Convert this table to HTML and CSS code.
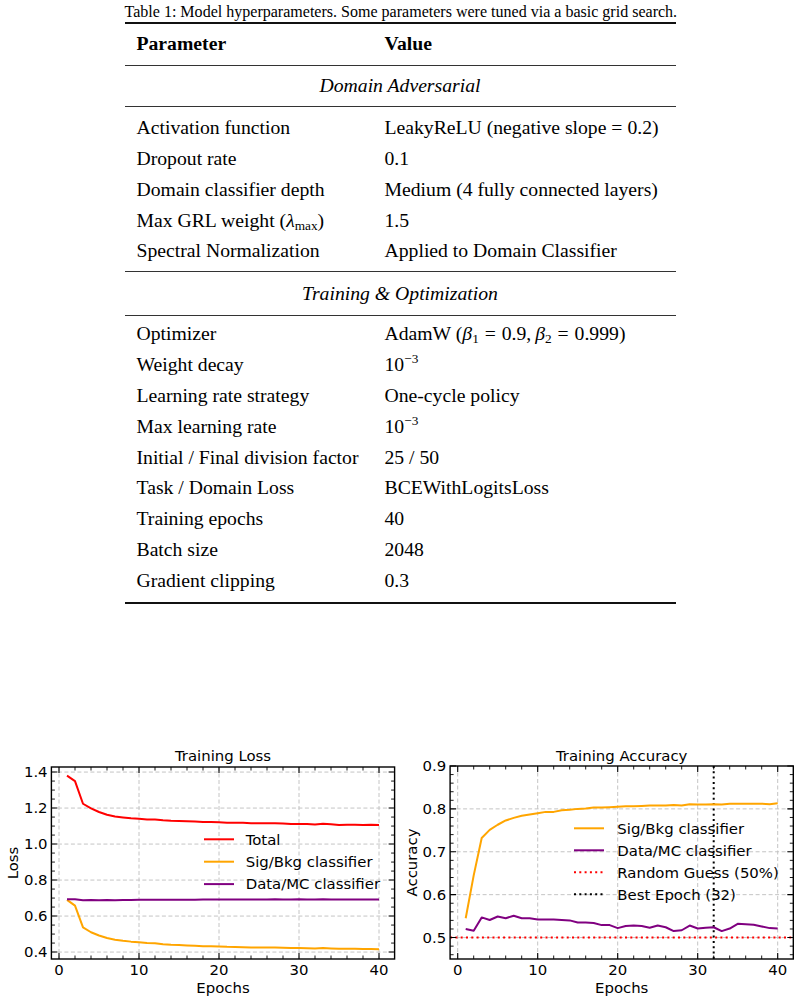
FILE: index.html
```html
<!DOCTYPE html>
<html lang="en">
<head>
<meta charset="utf-8">
<title>Model hyperparameters and training curves</title>
<link rel="stylesheet" href="styles.css">
</head>
<body>
<main class="page">
  <section class="table-block">
    <p class="caption">Table 1: Model hyperparameters. Some parameters were tuned via a basic grid search.</p>
    <div class="tbl">
      <div class="row head"><span>Parameter</span><span>Value</span></div>
      <div class="section-title s1">Domain Adversarial</div>
      <div class="group g1">
        <div class="row"><span>Activation function</span><span>LeakyReLU (negative slope = 0.2)</span></div>
        <div class="row"><span>Dropout rate</span><span>0.1</span></div>
        <div class="row"><span>Domain classifier depth</span><span>Medium (4 fully connected layers)</span></div>
        <div class="row"><span>Max GRL weight (<i>λ</i><span class="sub">max</span>)</span><span>1.5</span></div>
        <div class="row"><span>Spectral Normalization</span><span>Applied to Domain Classifier</span></div>
      </div>
      <div class="section-title s2">Training &amp; Optimization</div>
      <div class="group g2">
        <div class="row"><span>Optimizer</span><span>AdamW (<i>β</i><span class="sub">1</span><span class="rel">=</span>0.9,&#8201;<i>β</i><span class="sub">2</span><span class="rel">=</span>0.999)</span></div>
        <div class="row"><span>Weight decay</span><span>10<span class="sup">−3</span></span></div>
        <div class="row"><span>Learning rate strategy</span><span>One-cycle policy</span></div>
        <div class="row"><span>Max learning rate</span><span>10<span class="sup">−3</span></span></div>
        <div class="row"><span>Initial / Final division factor</span><span>25 / 50</span></div>
        <div class="row"><span>Task / Domain Loss</span><span>BCEWithLogitsLoss</span></div>
        <div class="row"><span>Training epochs</span><span>40</span></div>
        <div class="row"><span>Batch size</span><span>2048</span></div>
        <div class="row"><span>Gradient clipping</span><span>0.3</span></div>
      </div>
    </div>
  </section>

  <section class="figures">
    <!-- Training Loss -->
    <svg class="plot" width="400" height="262" viewBox="0 0 400 262">
      <path class="grid" d="M59 27V219M139 27V219M219 27V219M299 27V219M379 27V219M51.4 212.07H394.6M51.4 176.07H394.6M51.4 140.07H394.6M51.4 104.07H394.6M51.4 68.07H394.6M51.4 32.07H394.6"/>
      <g transform="translate(59 284.07) scale(8 -180)">
        <polyline class="curve c-red" points="1,1.38 2,1.35 3,1.224 4,1.198 5,1.178 6,1.163 7,1.153 8,1.148 9,1.143 10,1.14 11,1.137 12,1.136 13,1.132 14,1.129 15,1.128 16,1.127 17,1.125 18,1.123 19,1.122 20,1.121 21,1.119 22,1.119 23,1.118 24,1.116 25,1.115 26,1.115 27,1.116 28,1.114 29,1.111 30,1.112 31,1.111 32,1.109 33,1.113 34,1.11 35,1.106 36,1.107 37,1.107 38,1.106 39,1.107 40,1.106"/>
        <polyline class="curve c-orange" points="1,0.69 2,0.658 3,0.537 4,0.51 5,0.492 6,0.478 7,0.469 8,0.463 9,0.458 10,0.454 11,0.45 12,0.449 13,0.444 14,0.441 15,0.439 16,0.437 17,0.435 18,0.433 19,0.432 20,0.431 21,0.429 22,0.428 23,0.427 24,0.426 25,0.425 26,0.425 27,0.425 28,0.424 29,0.422 30,0.422 31,0.421 32,0.42 33,0.422 34,0.42 35,0.418 36,0.418 37,0.418 38,0.417 39,0.417 40,0.416"/>
        <polyline class="curve c-purple" points="1,0.693 2,0.693 3,0.688 4,0.689 5,0.688 6,0.689 7,0.688 8,0.689 9,0.689 10,0.69 11,0.69 12,0.69 13,0.69 14,0.691 15,0.691 16,0.691 17,0.691 18,0.692 19,0.692 20,0.692 21,0.692 22,0.692 23,0.692 24,0.692 25,0.692 26,0.692 27,0.693 28,0.692 29,0.692 30,0.693 31,0.692 32,0.692 33,0.693 34,0.692 35,0.692 36,0.692 37,0.692 38,0.692 39,0.692 40,0.692"/>
      </g>
      <rect class="frame" x="51.4" y="27" width="343.2" height="192"/>
      <path class="tick" d="M59 219v-6M139 219v-6M219 219v-6M299 219v-6M379 219v-6M59 27v6M139 27v6M219 27v6M299 27v6M379 27v6M51.4 212.07h6M51.4 176.07h6M51.4 140.07h6M51.4 104.07h6M51.4 68.07h6M51.4 32.07h6M394.6 212.07h-6M394.6 176.07h-6M394.6 140.07h-6M394.6 104.07h-6M394.6 68.07h-6M394.6 32.07h-6"/>
      <path class="tick minor" d="M75 219v-3.5M91 219v-3.5M107 219v-3.5M123 219v-3.5M155 219v-3.5M171 219v-3.5M187 219v-3.5M203 219v-3.5M235 219v-3.5M251 219v-3.5M267 219v-3.5M283 219v-3.5M315 219v-3.5M331 219v-3.5M347 219v-3.5M363 219v-3.5M75 27v3.5M91 27v3.5M107 27v3.5M123 27v3.5M155 27v3.5M171 27v3.5M187 27v3.5M203 27v3.5M235 27v3.5M251 27v3.5M267 27v3.5M283 27v3.5M315 27v3.5M331 27v3.5M347 27v3.5M363 27v3.5M51.4 203.07h3.5M51.4 194.07h3.5M51.4 185.07h3.5M51.4 167.07h3.5M51.4 158.07h3.5M51.4 149.07h3.5M51.4 131.07h3.5M51.4 122.07h3.5M51.4 113.07h3.5M51.4 95.07h3.5M51.4 86.07h3.5M51.4 77.07h3.5M51.4 59.07h3.5M51.4 50.07h3.5M51.4 41.07h3.5M394.6 203.07h-3.5M394.6 194.07h-3.5M394.6 185.07h-3.5M394.6 167.07h-3.5M394.6 158.07h-3.5M394.6 149.07h-3.5M394.6 131.07h-3.5M394.6 122.07h-3.5M394.6 113.07h-3.5M394.6 95.07h-3.5M394.6 86.07h-3.5M394.6 77.07h-3.5M394.6 59.07h-3.5M394.6 50.07h-3.5M394.6 41.07h-3.5"/>
      <text class="t-mid" x="223" y="20.5">Training Loss</text>
      <text class="t-end" x="47.6" y="37.4">1.4</text>
      <text class="t-end" x="47.6" y="73.4">1.2</text>
      <text class="t-end" x="47.6" y="109.4">1.0</text>
      <text class="t-end" x="47.6" y="145.4">0.8</text>
      <text class="t-end" x="47.6" y="181.4">0.6</text>
      <text class="t-end" x="47.6" y="217.4">0.4</text>
      <text class="t-mid" x="59" y="235">0</text>
      <text class="t-mid" x="139" y="235">10</text>
      <text class="t-mid" x="219" y="235">20</text>
      <text class="t-mid" x="299" y="235">30</text>
      <text class="t-mid" x="379" y="235">40</text>
      <text class="t-mid" x="223" y="252.7">Epochs</text>
      <text class="t-mid" transform="translate(18.3 123) rotate(-90)">Loss</text>
      <path class="legend-line c-red" d="M204 99.3h30"/>
      <path class="legend-line c-orange" d="M204 121.7h30"/>
      <path class="legend-line c-purple" d="M204 144.1h30"/>
      <text x="245.7" y="104.6">Total</text>
      <text x="245.7" y="127">Sig/Bkg classifier</text>
      <text x="245.7" y="149.4">Data/MC classifier</text>
    </svg>

    <!-- Training Accuracy -->
    <svg class="plot" width="400" height="262" viewBox="0 0 400 262">
      <path class="grid" d="M57.7 26V219M137.7 26V219M217.7 26V219M297.7 26V219M377.7 26V219M50.1 197.55H393.3M50.1 154.66H393.3M50.1 111.77H393.3M50.1 68.88H393.3"/>
      <path class="dotted d-black" d="M313.7 26V219"/>
      <path class="dotted d-red" d="M50.1 197.55H393.3"/>
      <g transform="translate(57.7 412) scale(8 -428.9)">
        <polyline class="curve c-orange" points="1,0.545 2,0.645 3,0.732 4,0.751 5,0.763 6,0.773 7,0.779 8,0.784 9,0.787 10,0.79 11,0.793 12,0.793 13,0.797 14,0.798 15,0.8 16,0.801 17,0.803 18,0.803 19,0.804 20,0.805 21,0.806 22,0.806 23,0.807 24,0.808 25,0.808 26,0.808 27,0.809 28,0.808 29,0.811 30,0.81 31,0.81 32,0.811 33,0.81 34,0.812 35,0.812 36,0.812 37,0.812 38,0.812 39,0.811 40,0.813"/>
        <polyline class="curve c-purple" points="1,0.52 2,0.516 3,0.547 4,0.541 5,0.549 6,0.545 7,0.551 8,0.545 9,0.545 10,0.542 11,0.542 12,0.542 13,0.541 14,0.54 15,0.535 16,0.535 17,0.534 18,0.529 19,0.529 20,0.522 21,0.527 22,0.528 23,0.527 24,0.523 25,0.528 26,0.524 27,0.515 28,0.517 29,0.528 30,0.521 31,0.523 32,0.524 33,0.515 34,0.521 35,0.532 36,0.531 37,0.53 38,0.526 39,0.522 40,0.521"/>
      </g>
      <rect class="frame" x="50.1" y="26" width="343.2" height="193"/>
      <path class="tick" d="M57.7 219v-6M137.7 219v-6M217.7 219v-6M297.7 219v-6M377.7 219v-6M57.7 26v6M137.7 26v6M217.7 26v6M297.7 26v6M377.7 26v6M50.1 197.55h6M50.1 154.66h6M50.1 111.77h6M50.1 68.88h6M50.1 26h6M393.3 197.55h-6M393.3 154.66h-6M393.3 111.77h-6M393.3 68.88h-6M393.3 26h-6"/>
      <path class="tick minor" d="M73.7 219v-3.5M89.7 219v-3.5M105.7 219v-3.5M121.7 219v-3.5M153.7 219v-3.5M169.7 219v-3.5M185.7 219v-3.5M201.7 219v-3.5M233.7 219v-3.5M249.7 219v-3.5M265.7 219v-3.5M281.7 219v-3.5M313.7 219v-3.5M329.7 219v-3.5M345.7 219v-3.5M361.7 219v-3.5M73.7 26v3.5M89.7 26v3.5M105.7 26v3.5M121.7 26v3.5M153.7 26v3.5M169.7 26v3.5M185.7 26v3.5M201.7 26v3.5M233.7 26v3.5M249.7 26v3.5M265.7 26v3.5M281.7 26v3.5M313.7 26v3.5M329.7 26v3.5M345.7 26v3.5M361.7 26v3.5M50.1 214.71h3.5M50.1 206.13h3.5M50.1 188.97h3.5M50.1 180.39h3.5M50.1 171.82h3.5M50.1 163.24h3.5M50.1 146.08h3.5M50.1 137.5h3.5M50.1 128.93h3.5M50.1 120.35h3.5M50.1 103.19h3.5M50.1 94.61h3.5M50.1 86.04h3.5M50.1 77.46h3.5M50.1 60.3h3.5M50.1 51.72h3.5M50.1 43.15h3.5M50.1 34.57h3.5M393.3 214.71h-3.5M393.3 206.13h-3.5M393.3 188.97h-3.5M393.3 180.39h-3.5M393.3 171.82h-3.5M393.3 163.24h-3.5M393.3 146.08h-3.5M393.3 137.5h-3.5M393.3 128.93h-3.5M393.3 120.35h-3.5M393.3 103.19h-3.5M393.3 94.61h-3.5M393.3 86.04h-3.5M393.3 77.46h-3.5M393.3 60.3h-3.5M393.3 51.72h-3.5M393.3 43.15h-3.5M393.3 34.57h-3.5"/>
      <text class="t-mid" x="221.7" y="20.5">Training Accuracy</text>
      <text class="t-end" x="46.3" y="31.3">0.9</text>
      <text class="t-end" x="46.3" y="74.2">0.8</text>
      <text class="t-end" x="46.3" y="117.1">0.7</text>
      <text class="t-end" x="46.3" y="160">0.6</text>
      <text class="t-end" x="46.3" y="202.9">0.5</text>
      <text class="t-mid" x="57.7" y="235">0</text>
      <text class="t-mid" x="137.7" y="235">10</text>
      <text class="t-mid" x="217.7" y="235">20</text>
      <text class="t-mid" x="297.7" y="235">30</text>
      <text class="t-mid" x="377.7" y="235">40</text>
      <text class="t-mid" x="221.7" y="252.7">Epochs</text>
      <text class="t-mid" transform="translate(16.5 122.5) rotate(-90)">Accuracy</text>
      <path class="legend-line c-orange" d="M174 88.3h30"/>
      <path class="legend-line c-purple" d="M174 110.3h30"/>
      <path class="dotted d-red" d="M174 132.3h30"/>
      <path class="dotted d-black" d="M174 154.3h30"/>
      <text x="217.3" y="93.6">Sig/Bkg classifier</text>
      <text x="217.3" y="115.6">Data/MC classifier</text>
      <text x="217.3" y="137.6">Random Guess (50%)</text>
      <text x="217.3" y="159.6">Best Epoch (32)</text>
    </svg>
  </section>
</main>
</body>
</html>
```

FILE: styles.css
```css
html, body {
  margin: 0;
  padding: 0;
  background: #ffffff;
}

.page {
  width: 800px;
  color: #000;
}

/* ---------- Table ---------- */
.table-block {
  box-sizing: border-box;
  height: 740px;
  width: 551px;
  margin: 0 auto;
  padding-top: 2px;
  font-family: "Liberation Serif", "Times New Roman", serif;
}

.caption {
  margin: 0;
  height: 20px;
  line-height: 20px;
  font-size: 16.05px;
  text-align: center;
  white-space: nowrap;
}

.tbl {
  border-top: 2px solid #111;
  border-bottom: 2px solid #111;
  font-size: 19.7px;
}

.row {
  display: grid;
  grid-template-columns: 248px 1fr;
  padding-left: 12px;
  line-height: 30.85px;
  white-space: nowrap;
}

.row.head {
  line-height: 39px;
  padding-bottom: 2px;
  font-weight: bold;
  border-bottom: 1px solid #333;
}

.section-title {
  text-align: center;
  font-style: italic;
  border-bottom: 1px solid #333;
}

.section-title.s1 {
  line-height: 38px;
  padding-bottom: 2px;
}

.section-title.s2 {
  line-height: 43px;
}

.group.g1 {
  padding: 5px 0 5px;
  border-bottom: 1px solid #333;
}

.group.g2 {
  padding: 2px 0 6px;
}

.rel {
  margin: 0 0.3em;
}

.sub {
  font-size: 13.3px;
  line-height: 0;
  vertical-align: -3px;
}

.sup {
  font-size: 13.3px;
  line-height: 0;
  vertical-align: 8px;
}

/* ---------- Figures ---------- */
.figures {
  display: flex;
}

.plot {
  display: block;
  flex: 0 0 400px;
}

.plot text {
  font-family: "DejaVu Sans", sans-serif;
  font-size: 14.9px;
  fill: #000;
}

.plot .t-mid {
  text-anchor: middle;
}

.plot .t-end {
  text-anchor: end;
}

.grid {
  fill: none;
  stroke: #c4c4c4;
  stroke-width: 1;
  stroke-dasharray: 4 2.5;
}

.frame {
  fill: none;
  stroke: #000;
  stroke-width: 1.4;
}

.tick {
  fill: none;
  stroke: #000;
  stroke-width: 1.1;
}

.tick.minor {
  stroke-width: 0.9;
}

.curve {
  fill: none;
  stroke-width: 2;
  stroke-linejoin: round;
  vector-effect: non-scaling-stroke;
}

.legend-line {
  fill: none;
  stroke-width: 2;
}

.c-red { stroke: #ff0000; }
.c-orange { stroke: #ffa500; }
.c-purple { stroke: #800080; }

.dotted {
  fill: none;
  stroke-width: 2;
  stroke-dasharray: 2 3.3;
}

.d-red { stroke: #ff0000; }
.d-black { stroke: #000000; }
```
